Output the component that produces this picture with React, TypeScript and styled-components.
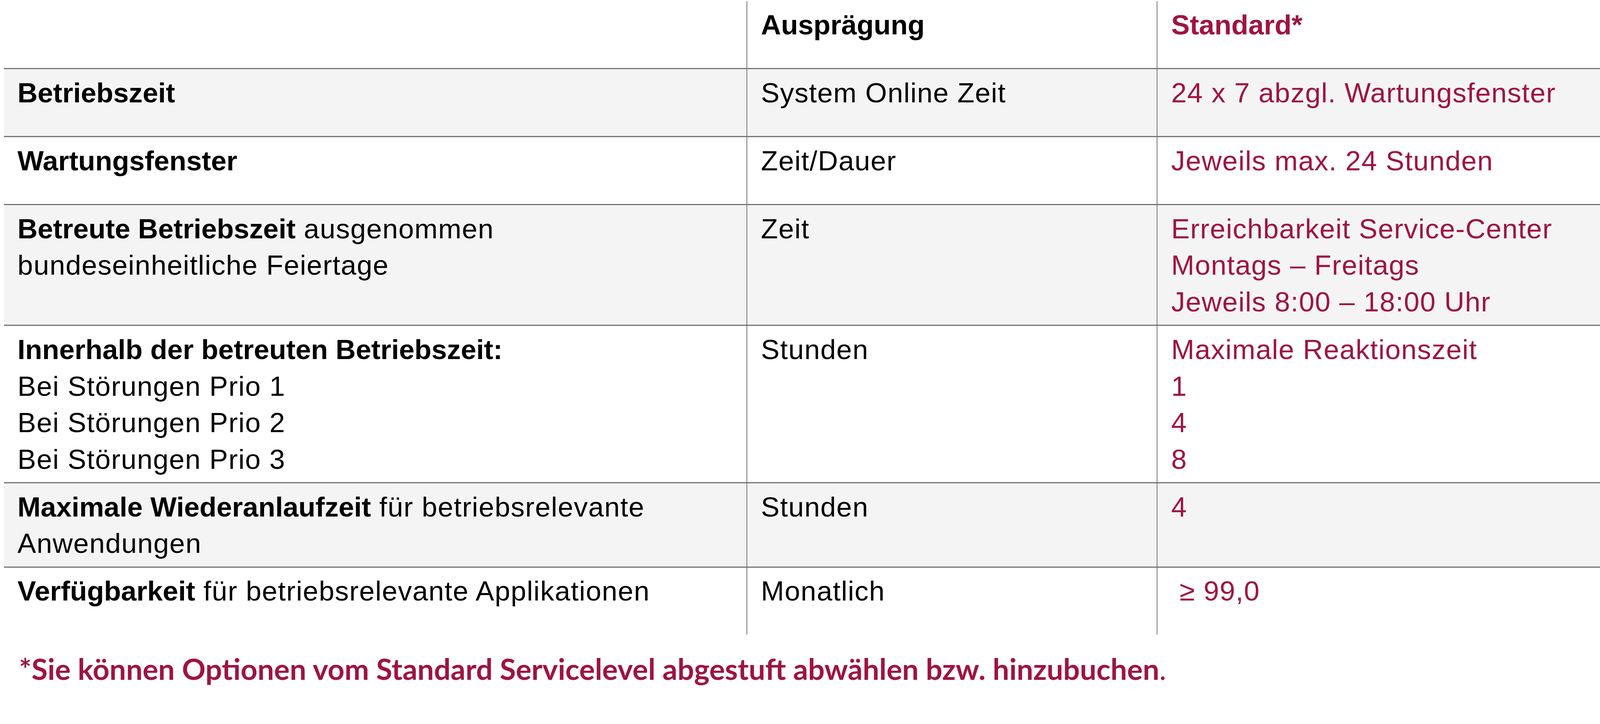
import React from 'react';
import styled, { createGlobalStyle } from 'styled-components';

// the layout was measured on a 4201px wide page, so every size is kept relative to the viewport width
const u = (n: number) => `calc(${n} * 100vw / 4201)`;

const GlobalStyle = createGlobalStyle`
  html, body {
    margin: 0;
    padding: 0;
    background: #ffffff;
    overflow: hidden;
  }
`;

const accent = '#9e1442';
const rule = '#747474';

const Page = styled.div`
  box-sizing: border-box;
  padding: ${u(3)} 0 0 ${u(10)};
  font-family: "Liberation Sans", Arial, sans-serif;
  color: #000000;
`;

const Table = styled.div`
  display: flex;
  flex-direction: column;
`;

const Row = styled.div<{ $shaded?: boolean; $last?: boolean }>`
  display: grid;
  grid-template-columns: ${u(1950)} ${u(1077)} 1fr;
  background: ${({ $shaded }) => ($shaded ? '#f4f4f4' : '#ffffff')};
  border-bottom: ${({ $last }) => ($last ? 'none' : `3px solid ${rule}`)};
`;

const Cell = styled.div<{ $accent?: boolean; $divider?: boolean }>`
  box-sizing: border-box;
  min-height: ${u(175.5)};
  padding: ${u(14)} ${u(20)} ${u(12)} ${u(36)};
  border-left: ${({ $divider }) => ($divider ? `2px solid ${rule}` : 'none')};
  font-size: ${u(73)};
  line-height: ${u(96)};
  letter-spacing: ${u(1.5)};
  color: ${({ $accent }) => ($accent ? accent : '#000000')};
  white-space: pre-line;
`;

const Strong = styled.span`
  font-weight: 700;
  letter-spacing: 0;
`;

const Note = styled.p`
  margin: ${u(43)} 0 0 ${u(40)};
  font-family: Lato, "Open Sans", sans-serif;
  font-size: ${u(77)};
  line-height: 1.2;
  color: ${accent};
`;

const NoteStrong = styled.span`
  font-weight: 700;
`;

type TableRow = {
    label: React.ReactNode;
    kind: string;
    standard: string;
    header?: boolean;
};

const rows: TableRow[] = [
    { label: '', kind: 'Ausprägung', standard: 'Standard*', header: true },
    { label: <Strong>Betriebszeit</Strong>, kind: 'System Online Zeit', standard: '24 x 7 abzgl. Wartungsfenster' },
    { label: <Strong>Wartungsfenster</Strong>, kind: 'Zeit/Dauer', standard: 'Jeweils max. 24 Stunden' },
    {
        label: <><Strong>Betreute Betriebszeit</Strong> ausgenommen{'\n'}bundeseinheitliche Feiertage</>,
        kind: 'Zeit',
        standard: 'Erreichbarkeit Service-Center\nMontags – Freitags\nJeweils 8:00 – 18:00 Uhr',
    },
    {
        label: <><Strong>Innerhalb der betreuten Betriebszeit:</Strong>{'\n'}Bei Störungen Prio 1{'\n'}Bei Störungen Prio 2{'\n'}Bei Störungen Prio 3</>,
        kind: 'Stunden',
        standard: 'Maximale Reaktionszeit\n1\n4\n8',
    },
    {
        label: <><Strong>Maximale Wiederanlaufzeit</Strong> für betriebsrelevante{'\n'}Anwendungen</>,
        kind: 'Stunden',
        standard: '4',
    },
    {
        label: <><Strong>Verfügbarkeit</Strong> für betriebsrelevante Applikationen</>,
        kind: 'Monatlich',
        standard: '\u00a0≥ 99,0',
    },
];

const App = () => {
    return (
        <>
            <GlobalStyle />
            <Page>
                <Table>
                    {rows.map((row, index) => (
                        <Row key={index} $shaded={index % 2 === 1} $last={index === rows.length - 1}>
                            <Cell>{row.label}</Cell>
                            <Cell $divider>{row.header ? <Strong>{row.kind}</Strong> : row.kind}</Cell>
                            <Cell $divider $accent>{row.header ? <Strong>{row.standard}</Strong> : row.standard}</Cell>
                        </Row>
                    ))}
                </Table>
                <Note>
                    <NoteStrong>*Sie können Optionen vom Standard Servicelevel abgestuft abwählen bzw. hinzubuchen</NoteStrong>.
                </Note>
            </Page>
        </>
    );
};

export default App;
